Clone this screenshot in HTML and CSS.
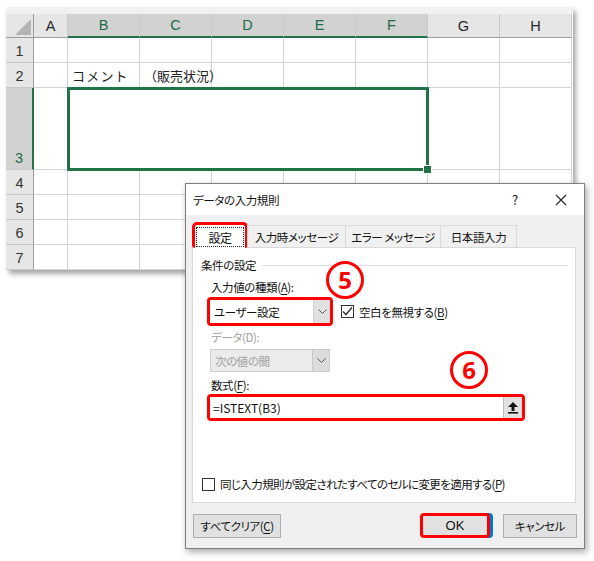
FILE: index.html
```html
<!DOCTYPE html>
<html lang="ja">
<head>
<meta charset="utf-8">
<link rel="stylesheet" href="styles.css">
</head>
<body>
<div class="sheet">
  <div class="grid">
    <div class="corner"><svg width="28" height="24"><polygon points="9,21 25,21 25,5" fill="#b4b4b4"/></svg></div>
    <div class="ch">A</div>
    <div class="ch sel">B</div>
    <div class="ch sel">C</div>
    <div class="ch sel">D</div>
    <div class="ch sel">E</div>
    <div class="ch sel">F</div>
    <div class="ch">G</div>
    <div class="ch">H</div>

    <div class="rh">1</div>
    <div class="c"></div><div class="c"></div><div class="c"></div><div class="c"></div><div class="c"></div><div class="c"></div><div class="c"></div><div class="c"></div>

    <div class="rh">2</div>
    <div class="c"></div><div class="c txt spaced">コメント</div><div class="c txt">（販売状況）</div><div class="c"></div><div class="c"></div><div class="c"></div><div class="c"></div><div class="c"></div>

    <div class="rh sel">3</div>
    <div class="c"></div><div class="c merge"></div><div class="c"></div><div class="c"></div>

    <div class="rh">4</div>
    <div class="c"></div><div class="c"></div><div class="c"></div><div class="c"></div><div class="c"></div><div class="c"></div><div class="c"></div><div class="c"></div>
    <div class="rh">5</div>
    <div class="c"></div><div class="c"></div><div class="c"></div><div class="c"></div><div class="c"></div><div class="c"></div><div class="c"></div><div class="c"></div>
    <div class="rh">6</div>
    <div class="c"></div><div class="c"></div><div class="c"></div><div class="c"></div><div class="c"></div><div class="c"></div><div class="c"></div><div class="c"></div>
    <div class="rh">7</div>
    <div class="c"></div><div class="c"></div><div class="c"></div><div class="c"></div><div class="c"></div><div class="c"></div><div class="c"></div><div class="c"></div>
  </div>
</div>

<div class="dialog">
  <div class="titlebar">
    <span class="title">データの入力規則</span>
    <span class="help">?</span>
    <span class="close"><svg width="12" height="12" viewBox="0 0 12 12"><path d="M1 1 L11 11 M11 1 L1 11" stroke="#222" stroke-width="1.1"/></svg></span>
  </div>
  <div class="body">
    <div class="tabs">
      <div class="tab active hl"><span class="focus">設定</span></div>
      <div class="tab t2">入力時メッセージ</div>
      <div class="tab t3">エラー メッセージ</div>
      <div class="tab t4">日本語入力</div>
    </div>
    <div class="panel">
      <div class="group">条件の設定<span class="rule"></span></div>
      <div class="fields">
        <div class="label">入力値の種類(<u>A</u>):</div>
        <div class="allow-row">
          <div class="redbox">
            <div class="select">ユーザー設定<span class="dd"><svg width="9" height="6" viewBox="0 0 9 6"><path d="M0.5 0.5 L4.5 4.5 L8.5 0.5" fill="none" stroke="#555" stroke-width="1"/></svg></span></div>
          </div>
          <div class="check"><span class="box"><svg width="11" height="11" viewBox="0 0 11 11"><path d="M1 5.5 L4 8.5 L10 1.5" fill="none" stroke="#222" stroke-width="1.2"/></svg></span>空白を無視する(<u>B</u>)</div>
        </div>
        <div class="label dis l2">データ(D):</div>
        <div class="select disabled">次の値の間<span class="dd"><svg width="9" height="6" viewBox="0 0 9 6"><path d="M0.5 0.5 L4.5 4.5 L8.5 0.5" fill="none" stroke="#555" stroke-width="1"/></svg></span></div>
        <div class="label l3">数式(<u>F</u>):</div>
        <div class="redbox formula-box">
          <div class="formula">=ISTEXT(B3)<span class="ref"><svg width="12" height="13" viewBox="0 0 12 13"><path d="M6 1 L11 6 L7.5 6 L7.5 10 L4.5 10 L4.5 6 L1 6 Z" fill="#111"/><rect x="1" y="11" width="10" height="1.6" fill="#111"/></svg></span></div>
        </div>
      </div>
      <div class="check bottom"><span class="box"></span>同じ入力規則が設定されたすべてのセルに変更を適用する(<u>P</u>)</div>
    </div>
    <div class="buttons">
      <div class="btn clear">すべてクリア(<u>C</u>)</div>
      <div class="spacer"></div>
      <div class="btn ok">OK</div>
      <div class="btn cancel">キャンセル</div>
    </div>
  </div>
  <div class="badge b5">5</div>
  <div class="badge b6">6</div>
</div>
</body>
</html>
```
FILE: styles.css
```css
* { box-sizing: border-box; }
html, body { margin: 0; padding: 0; background: #fff; }
body {
  width: 594px; height: 561px; position: relative; overflow: hidden;
  font-family: "Noto Sans CJK JP", "Noto Sans", sans-serif;
}

/* ---------- spreadsheet ---------- */
.sheet {
  margin: 7px 0 0 6px;
  width: 567px;
  padding-top: 7px;
  background: #f1f1f1;
  box-shadow: 3px 4px 5px rgba(0,0,0,0.35);
}
.grid {
  display: grid;
  grid-template-columns: 28px 34px repeat(7, 72px);
  grid-template-rows: 24px 25px 25px 82px 25px 25px 25px 25px;
  background: #fff;
}
.c {
  border-right: 1px solid #d4d4d4;
  border-bottom: 1px solid #d4d4d4;
}
.txt {
  font-size: 13px; color: #222;
  display: flex; align-items: center; padding-left: 4px; white-space: nowrap;
}
.spaced { letter-spacing: 1.2px; }
.corner {
  background: #e6e6e6;
  border-right: 1px solid #9b9b9b;
  border-bottom: 1px solid #9b9b9b;
}
.corner svg { display: block; }
.ch {
  background: #e6e6e6;
  border-right: 1px solid #c8c8c8;
  border-bottom: 1px solid #9b9b9b;
  font-family: "Liberation Sans", sans-serif;
  font-size: 14.5px; color: #262626;
  display: flex; align-items: center; justify-content: center;
}
.ch.sel {
  background: #d2d2d2;
  color: #1d6b48;
  border-bottom: 2px solid #217346;
}
.rh {
  background: #e6e6e6;
  border-right: 1px solid #9b9b9b;
  border-bottom: 1px solid #c8c8c8;
  font-family: "Liberation Sans", sans-serif;
  font-size: 14.5px; color: #333;
  display: flex; align-items: flex-end; justify-content: center;
  padding-bottom: 3px;
}
.rh.sel {
  background: #d2d2d2;
  color: #1d6b48;
  border-right: 2px solid #217346;
}
.merge {
  grid-column: span 5;
  position: relative;
  outline: 3px solid #217346;
  outline-offset: -2px;
  z-index: 1;
}
.merge::after {
  content: "";
  position: absolute;
  right: -5px; bottom: -5px;
  width: 7px; height: 7px;
  background: #217346;
  border: 1px solid #fff;
}

/* ---------- dialog ---------- */
.dialog {
  position: absolute;
  left: 185px; top: 183px;
  width: 400px; height: 366px;
  border: 1px solid #7f7f7f;
  background: #f0f0f0;
  box-shadow: 2px 3px 7px rgba(0,0,0,0.35);
  font-size: 11.5px; color: #111;
  letter-spacing: -0.4px;
  font-feature-settings: "palt";
}
.titlebar {
  height: 31px;
  background: #fff;
  display: flex; align-items: center;
  padding-left: 7px;
}
.title { flex: 1; }
.help { width: 14px; margin-right: 29px; font-size: 13px; }
.close { width: 12px; height: 12px; margin-right: 17px; display: flex; }
.body { padding: 7px 8px 10px 6px; }
.tabs { display: flex; height: 25px; padding-left: 1px; position: relative; z-index: 2; }
.tab {
  height: 22px; margin-top: 3px;
  border: 1px solid #d9d9d9; border-bottom: none;
  background: #f0f0f0;
  display: flex; align-items: center; justify-content: center;
  white-space: nowrap;
}
.tab + .tab { margin-left: -1px; }
.tab.active {
  height: 26px; margin-top: 0;
  width: 56px;
  background: #fff;
  border: 3px solid #ff0000; border-bottom: none;
  border-radius: 5px 5px 3px 3px;
  margin-left: -1px;
  padding-top: 1px;
}
.focus {
  border: 1px dotted #222;
  width: 48px; height: 20px;
  display: flex; align-items: center; justify-content: center;
  font-size: 12px;
}
.t2 { width: 99px; }
.t3 { width: 96px; }
.t4 { width: 77px; }
.panel {
  width: 384px; height: 256px;
  background: #fff;
  border: 1px solid #d9d9d9;
  padding: 9px 8px 10px 8px;
  display: flex; flex-direction: column;
}
.group {
  display: flex; align-items: center;
  height: 16px; line-height: 16px;
  color: #111;
}
.rule { flex: 1; height: 1px; background: #dcdcdc; margin-left: 6px; }
.fields { padding-left: 9px; }
.label { height: 16px; line-height: 16px; margin-top: 6px; padding-left: 1px; }
.label u, .check u, .btn u { text-decoration: underline; text-underline-offset: 2px; }
.label.dis { color: #a0a0a0; }
.label.l2 { margin-top: 3px; }
.label.l3 { margin-top: 5px; }
.allow-row { display: flex; align-items: center; margin-top: 2px; }
.redbox {
  border: 3px solid #ff0000;
  border-radius: 4px;
  margin-left: -3px;
}
.select {
  width: 120px; height: 23px;
  border: 1px solid #7a7a7a;
  background: #fff;
  display: flex; align-items: center;
  padding-left: 4px;
  position: relative;
}
.redbox .select { border: none; }
.dd {
  position: absolute; right: 0; top: 0; bottom: 0;
  width: 17px;
  background: #e1e1e1;
  border-left: 1px solid #cfcfcf;
  display: flex; align-items: center; justify-content: center;
}
.select.disabled {
  margin-top: 4px;
  background: #ebebeb;
  border-color: #cccccc;
  color: #a0a0a0;
}
.select.disabled .dd { background: #dcdcdc; border-left-color: #c8c8c8; }
.check {
  display: flex; align-items: center;
  white-space: nowrap;
  margin-left: 8px;
}
.box {
  width: 13px; height: 13px;
  border: 1px solid #333;
  background: #fff;
  margin-right: 5px;
  display: flex; align-items: center; justify-content: center;
}
.formula-box { margin-top: 1px; width: 318px; }
.formula {
  height: 21px;
  display: flex; align-items: center;
  padding-left: 3px;
  position: relative;
  background: #fff;
  font-size: 12px;
  letter-spacing: 0;
  font-feature-settings: normal;
}
.ref {
  position: absolute; right: 0; top: 0; bottom: 0;
  width: 19px;
  background: #e1e1e1;
  border-left: 1px solid #bdbdbd;
  display: flex; align-items: center; justify-content: center;
}
.check.bottom { margin-top: auto; margin-left: 1px; letter-spacing: -0.6px; }
.buttons {
  display: flex;
  margin-top: 11px;
  height: 24px;
}
.btn {
  height: 24px;
  background: #e1e1e1;
  border: 1px solid #adadad;
  display: flex; align-items: center; justify-content: center;
  white-space: nowrap;
}
.clear { width: 88px; margin-left: 1px; }
.spacer { flex: 1; }
.ok {
  width: 70px; height: 25px; margin-top: -1px;
  border: 3px solid #ff0000;
  border-radius: 4px;
  box-shadow: 3px 0 0 #0078d7;
  font-family: "Liberation Sans", sans-serif;
  font-size: 13px;
  letter-spacing: 0;
}
.cancel { width: 74px; margin-left: 13px; margin-right: -1px; }

.badge {
  position: absolute;
  width: 38px; height: 38px;
  border: 3px solid #ff0000;
  border-radius: 50%;
  background: #fff;
  color: #ff0000;
  font-family: "Noto Sans", sans-serif;
  font-weight: bold;
  font-size: 24px;
  letter-spacing: 0;
  display: flex; align-items: center; justify-content: center;
  line-height: 1;
}
.b5 { left: 140px; top: 77px; }
.b6 { left: 264px; top: 167px; }
```
